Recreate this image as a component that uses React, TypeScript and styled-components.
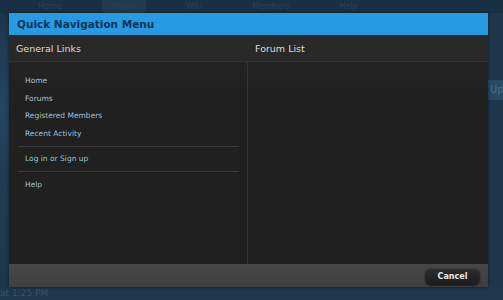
import React from "react";
import styled, { createGlobalStyle } from "styled-components";

const Global = createGlobalStyle`
  html, body { margin: 0; padding: 0; background: #1b3042; }
  body { width: 503px; height: 300px; overflow: hidden; font-family: "DejaVu Sans", Verdana, sans-serif; }
`;

const Page = styled.div`
  position: relative;
  width: 503px;
  height: 300px;
  overflow: hidden;
  background: linear-gradient(180deg, #1a3044 0%, #1e374c 40%, #1f384d 100%);
  display: flex;
  flex-direction: column;
`;

const NavStrip = styled.div`
  height: 13px;
  display: flex;
  gap: 30px;
  padding-left: 28px;
  background: #193044;
  font-size: 8px;
  color: #264258;
  line-height: 13px;
`;

const NavTab = styled.span<{ $active?: boolean }>`
  padding: 0 10px;
  background: ${(p) => (p.$active ? "#203a50" : "transparent")};
`;

const PageBody = styled.div`
  flex: 1;
  display: flex;
  justify-content: space-between;
`;

const LeftEdge = styled.div`
  width: 9px;
  background: linear-gradient(180deg, #1d364b 0%, #284660 35%, #223d53 60%, #1e374c 100%);
`;

const RightEdge = styled.div`
  width: 15px;
  background: #1f374c;
  display: flex;
  flex-direction: column;
  padding-top: 67px;
`;

const UpButton = styled.div`
  height: 20px;
  background: #2a4a64;
  color: #4a6a84;
  font-size: 10px;
  line-height: 20px;
  padding-left: 2px;
`;

const Footnote = styled.div`
  height: 13px;
  font-size: 9px;
  color: #35526a;
  line-height: 13px;
  font-family: "DejaVu Sans", sans-serif;
`;

const Overlay = styled.div`
  position: absolute;
  inset: 0;
  padding: 13px 15px 13px 9px;
  display: flex;
`;

const Dialog = styled.div`
  flex: 1;
  display: flex;
  flex-direction: column;
  box-shadow: 0 0 4px rgba(0, 0, 0, 0.5);
  background: #202020;
`;

const TitleBar = styled.div`
  height: 22px;
  background: #279ae2;
  color: #0b3557;
  font-family: "DejaVu Sans", Verdana, sans-serif;
  font-weight: bold;
  font-size: 10.5px;
  line-height: 23px;
  padding-left: 8px;
`;

const HeadRow = styled.div`
  height: 27px;
  display: grid;
  grid-template-columns: 239px 1fr;
  background: #2a2929;
  border-bottom: 1px solid #333;
  box-sizing: border-box;
`;

const HeadCell = styled.div`
  color: #dcdcdc;
  font-size: 9.5px;
  line-height: 27px;
  padding-left: 7px;
`;

const Columns = styled.div`
  flex: 1;
  display: grid;
  grid-template-columns: 239px 1fr;
  background: linear-gradient(180deg, #242424 0%, #202020 30px, #202020 100%);
`;

const LeftCol = styled.div`
  border-right: 1px solid #353535;
  padding: 10px 0 0 9px;
  display: flex;
  flex-direction: column;
`;

const RightCol = styled.div``;

const LinkGroup = styled.div`
  display: flex;
  flex-direction: column;
  padding: 0 0 0 7px;
`;

const Link = styled.a`
  color: #9fc0dc;
  font-size: 7.5px;
  line-height: 17.5px;
  text-decoration: none;
  font-family: "DejaVu Sans", Verdana, sans-serif;
`;

const Sep = styled.div`
  height: 1px;
  background: #3a3a3a;
  margin: 3.5px 8px 3.5px 0;
`;

const Footer = styled.div`
  height: 23px;
  background: linear-gradient(180deg, #474747 0%, #3f3f3f 100%);
  display: flex;
  align-items: center;
  justify-content: flex-end;
  padding-right: 8px;
`;

const Button = styled.button`
  height: 17px;
  width: 55px;
  border: none;
  border-radius: 6px;
  background: linear-gradient(180deg, #2e2e2e 0%, #1b1b1b 100%);
  box-shadow: 0 1px 2px rgba(0, 0, 0, 0.6), inset 0 1px 0 rgba(255, 255, 255, 0.08);
  color: #e8e8e8;
  font-family: "DejaVu Sans", Verdana, sans-serif;
  font-size: 8px;
  font-weight: bold;
  padding: 0;
  margin-top: 2px;
`;

export default function App() {
  return (
    <>
      <Global />
      <Page>
        <NavStrip>
          <NavTab>Home</NavTab>
          <NavTab $active>Media</NavTab>
          <NavTab>Wiki</NavTab>
          <NavTab>Members</NavTab>
          <NavTab>Help</NavTab>
        </NavStrip>
        <PageBody>
          <LeftEdge />
          <RightEdge>
            <UpButton>Up</UpButton>
          </RightEdge>
        </PageBody>
        <Footnote>at 1:25 PM</Footnote>
        <Overlay>
          <Dialog>
            <TitleBar>Quick Navigation Menu</TitleBar>
            <HeadRow>
              <HeadCell>General Links</HeadCell>
              <HeadCell>Forum List</HeadCell>
            </HeadRow>
            <Columns>
              <LeftCol>
                <LinkGroup>
                  <Link href="#">Home</Link>
                  <Link href="#">Forums</Link>
                  <Link href="#">Registered Members</Link>
                  <Link href="#">Recent Activity</Link>
                </LinkGroup>
                <Sep />
                <LinkGroup>
                  <Link href="#">Log in or Sign up</Link>
                </LinkGroup>
                <Sep />
                <LinkGroup>
                  <Link href="#">Help</Link>
                </LinkGroup>
              </LeftCol>
              <RightCol />
            </Columns>
            <Footer>
              <Button>Cancel</Button>
            </Footer>
          </Dialog>
        </Overlay>
      </Page>
    </>
  );
}
